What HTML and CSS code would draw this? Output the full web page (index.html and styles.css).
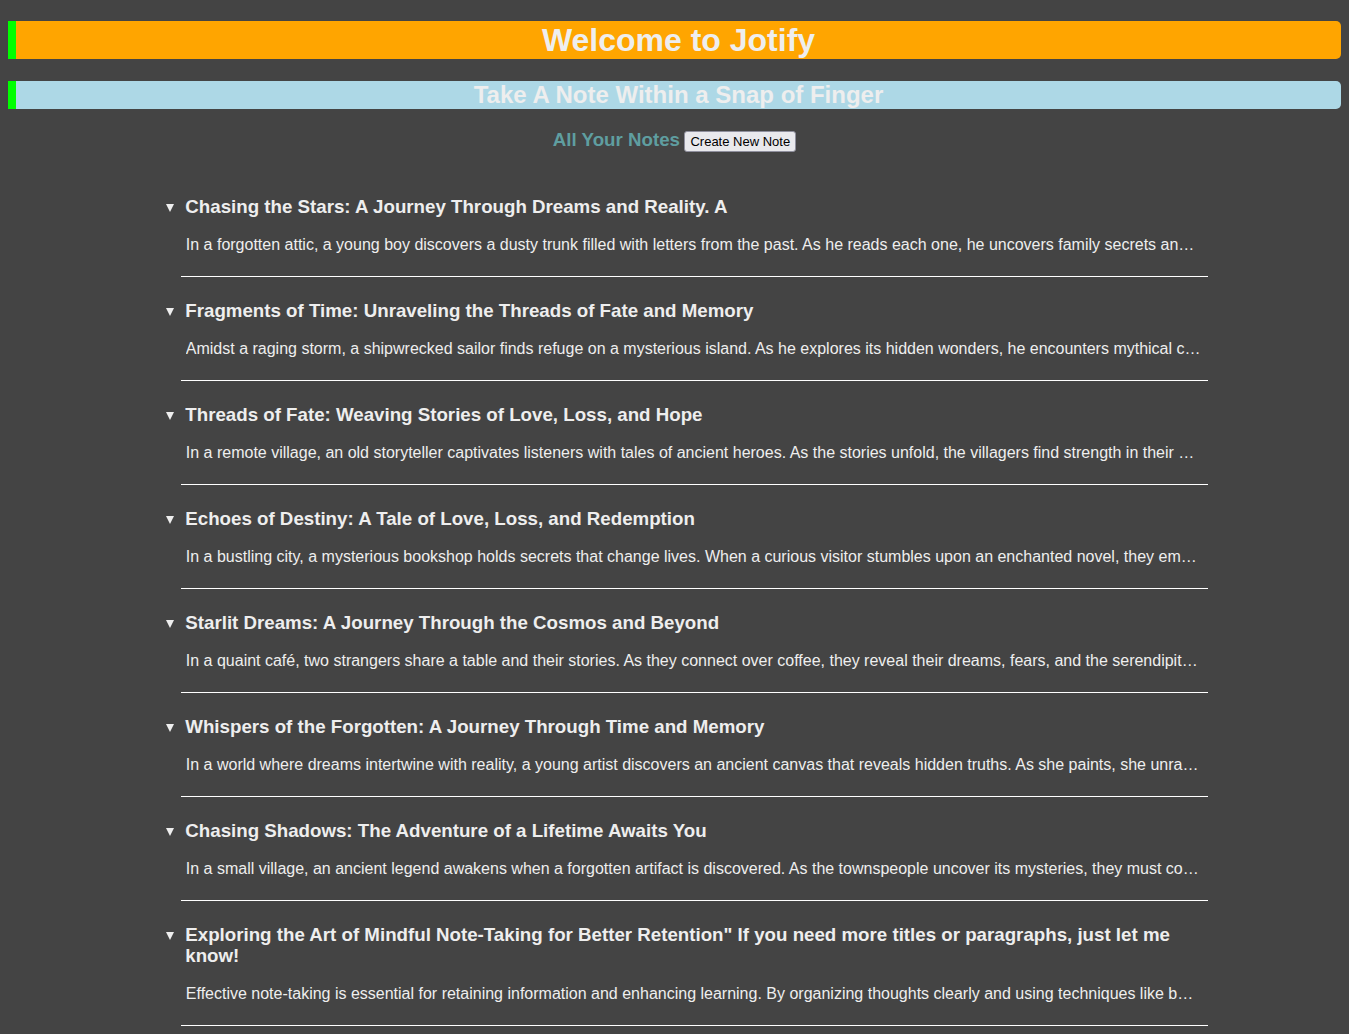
FILE: index.html
```html
<!DOCTYPE html>
<html lang="en">
<head>
<meta charset="utf-8">
<title>Jotify</title>
<link rel="stylesheet" href="styles.css">
</head>
<body>
<h1 class="banner banner-main">Welcome to Jotify</h1>
<h2 class="banner banner-sub">Take A Note Within a Snap of Finger</h2>
<div class="notes-head">
  <h3 class="notes-title">All Your Notes</h3> <button class="new-btn" type="button">Create New Note</button>
</div>
<div class="notes">
  <div class="note">
    <details open>
      <summary>Chasing the Stars: A Journey Through Dreams and Reality. A</summary>
      <p>In a forgotten attic, a young boy discovers a dusty trunk filled with letters from the past. As he reads each one, he uncovers family secrets and stories of love that shaped generations before him.</p>
    </details>
    <hr>
  </div>
  <div class="note">
    <details open>
      <summary>Fragments of Time: Unraveling the Threads of Fate and Memory</summary>
      <p>Amidst a raging storm, a shipwrecked sailor finds refuge on a mysterious island. As he explores its hidden wonders, he encounters mythical creatures and forgotten ruins of a lost civilization.</p>
    </details>
    <hr>
  </div>
  <div class="note">
    <details open>
      <summary>Threads of Fate: Weaving Stories of Love, Loss, and Hope</summary>
      <p>In a remote village, an old storyteller captivates listeners with tales of ancient heroes. As the stories unfold, the villagers find strength in their shared history and courage for the future.</p>
    </details>
    <hr>
  </div>
  <div class="note">
    <details open>
      <summary>Echoes of Destiny: A Tale of Love, Loss, and Redemption</summary>
      <p>In a bustling city, a mysterious bookshop holds secrets that change lives. When a curious visitor stumbles upon an enchanted novel, they embark on an adventure beyond imagination.</p>
    </details>
    <hr>
  </div>
  <div class="note">
    <details open>
      <summary>Starlit Dreams: A Journey Through the Cosmos and Beyond</summary>
      <p>In a quaint café, two strangers share a table and their stories. As they connect over coffee, they reveal their dreams, fears, and the serendipitous moments that brought them together.</p>
    </details>
    <hr>
  </div>
  <div class="note">
    <details open>
      <summary>Whispers of the Forgotten: A Journey Through Time and Memory</summary>
      <p>In a world where dreams intertwine with reality, a young artist discovers an ancient canvas that reveals hidden truths. As she paints, she unravels the mysteries of a forgotten realm.</p>
    </details>
    <hr>
  </div>
  <div class="note">
    <details open>
      <summary>Chasing Shadows: The Adventure of a Lifetime Awaits You</summary>
      <p>In a small village, an ancient legend awakens when a forgotten artifact is discovered. As the townspeople uncover its mysteries, they must confront the darkness that threatens their home.</p>
    </details>
    <hr>
  </div>
  <div class="note">
    <details open>
      <summary>Exploring the Art of Mindful Note-Taking for Better Retention" If you need more titles or paragraphs, just let me know!</summary>
      <p>Effective note-taking is essential for retaining information and enhancing learning. By organizing thoughts clearly and using techniques like bullet points, summaries and mind maps, you can remember more.</p>
    </details>
    <hr>
  </div>
</div>
</body>
</html>
```

FILE: styles.css
```css
html {
  background: #444444;
}

body {
  margin: 8px;
  background: #444444;
  color: #eeeeee;
  font-family: "Liberation Sans", Arial, sans-serif;
}

.banner {
  text-align: center;
  color: #eeeeee;
  font-weight: bold;
  border-left: 8px solid #00ff00;
  border-radius: 0 5px 5px 0;
}

.banner-main {
  background: #ffa500;
  font-size: 32px;
  line-height: 38px;
  margin: 13px 0 22px;
}

.banner-sub {
  background: #add8e6;
  font-size: 24px;
  line-height: 28px;
  margin: 0;
}

.notes-head {
  text-align: center;
  margin-top: 20px;
  line-height: 22px;
}

.notes-title {
  display: inline;
  font-size: 18.72px;
  font-weight: bold;
  color: #5f9ea0;
  margin: 0;
}

.new-btn {
  font-family: "Liberation Sans", Arial, sans-serif;
  font-size: 13px;
  line-height: 15px;
  color: #000000;
  background: #e9e9ed;
  border: 1px solid #8f8f9d;
  border-radius: 3px;
  padding: 2px 5px;
  vertical-align: baseline;
}

.notes {
  width: 80%;
  margin: 44px auto 0;
  padding-left: 24.5px;
  box-sizing: border-box;
}

.note details summary {
  display: flex;
  align-items: flex-start;
  list-style: none;
  font-size: 18.72px;
  font-weight: bold;
  line-height: 21px;
  color: #eeeeee;
  cursor: pointer;
  padding-right: 6px;
}

.note details summary::-webkit-details-marker {
  display: none;
}

.note details summary::before {
  content: "";
  flex: 0 0 auto;
  width: 0;
  height: 0;
  border-left: 4.5px solid transparent;
  border-right: 4.5px solid transparent;
  border-top: 8px solid #eeeeee;
  margin: 8px 11.5px 0 0;
}

.note p {
  margin: 19px 6px 0 20px;
  font-size: 16px;
  line-height: 18px;
  white-space: nowrap;
  overflow: hidden;
  text-overflow: ellipsis;
  color: #eeeeee;
}

.note hr {
  border: 0;
  border-top: 1px solid #ffffff;
  height: 0;
  margin: 22px 0 23px 15px;
}
```
